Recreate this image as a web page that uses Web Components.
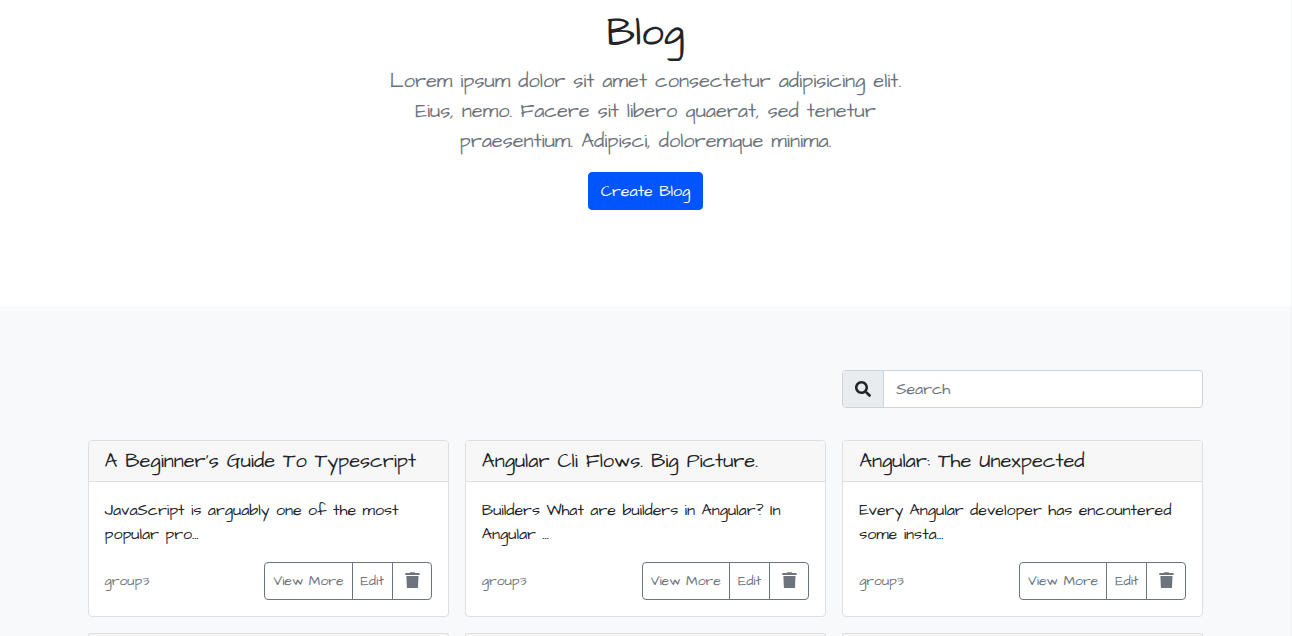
<!DOCTYPE html>
<html lang="en">
<head>
<meta charset="utf-8">
<title>Blog</title>
<style>
  html, body { margin: 0; height: 100%; overflow: hidden; }
  body { background: #fff; color: #212529; font-family: "Architects Daughter", Lato, "Open Sans", sans-serif; font-size: 16px; line-height: 24px; }
</style>
</head>
<body>
<blog-page></blog-page>
<script>
const define = (name, html) => {
  const tpl = document.createElement('template');
  tpl.innerHTML = html;
  customElements.define(name, class extends HTMLElement {
    connectedCallback() {
      if (this.shadowRoot) return;
      this.attachShadow({ mode: 'open' }).append(tpl.content.cloneNode(true));
    }
  });
};

define('icon-search', `
<style>:host { display: block; width: 16px; height: 16px; } svg { display: block; }</style>
<svg width="16" height="16" viewBox="0 0 512 512" fill="currentColor"><path d="M505 442.7L405.3 343c-4.500-4.500-10.600-7-17-7H372c27.600-35.300 44-79.700 44-128C416 93.100 322.900 0 208 0S0 93.100 0 208s93.100 208 208 208c48.300 0 92.700-16.400 128-44v16.300c0 6.400 2.500 12.500 7 17l99.700 99.700c9.400 9.400 24.600 9.400 33.900 0l28.300-28.300c9.400-9.400 9.400-24.600.1-34zM208 336c-70.700 0-128-57.200-128-128 0-70.700 57.200-128 128-128 70.700 0 128 57.200 128 128 0 70.700-57.200 128-128 128z"/></svg>`);

define('icon-trash', `
<style>:host { display: block; width: 14px; height: 16px; } svg { display: block; overflow: visible; }</style>
<svg width="14" height="16" viewBox="0 0 448 512" fill="currentColor"><path transform="translate(14 0)" d="M438 28H312l-9.400-10A24 24 0 0 0 281.100 8H166.800a23.700 23.700 0 0 0-21.400 10L136 28H10A16 16 0 0 0 -6 44v36a16 16 0 0 0 16 16h428a16 16 0 0 0 16-16V44a16 16 0 0 0-16-16zM45 484a28 28 0 0 0 28 28h302a28 28 0 0 0 28-28L418 128H30z"/></svg>`);

define('primary-button', `
<style>
  :host { display: inline-block; }
  button { display: block; padding: 6px 12px; border: 1px solid #0055ff; border-radius: 4px; background: #0055ff; color: #fff; font: inherit; line-height: 24px; }
</style><button><slot></slot></button>`);

define('blog-hero', `
<style>
  :host { display: block; box-sizing: border-box; height: 306px; padding-top: 10px; text-align: center; }
  h1 { margin: 0 0 8px; font-size: 40px; font-weight: 400; line-height: 48px; }
  p { margin: 0 auto 16px; width: 547px; font-size: 20px; line-height: 30px; color: #6c757d; }
</style>
<h1>Blog</h1>
<p>Lorem ipsum dolor sit amet consectetur adipisicing elit. Eius, nemo. Facere sit libero quaerat, sed tenetur praesentium. Adipisci, doloremque minima.</p>
<primary-button>Create Blog</primary-button>`);

define('search-box', `
<style>
  :host { display: flex; box-sizing: border-box; height: 38px; border: 1px solid #ced4da; border-radius: 4px; background: #fff; overflow: hidden; }
  .icon { box-sizing: border-box; width: 41px; padding: 10px 12px; background: #e9ecef; border-right: 1px solid #ced4da; }
  input { flex: 1; min-width: 0; padding: 0 12px; border: 0; outline: 0; background: none; font: inherit; line-height: 24px; color: #495057; }
  input::placeholder { color: #6c757d; opacity: 1; }
</style>
<div class="icon"><icon-search></icon-search></div>
<input placeholder="Search">`);

define('button-group', `
<style>
  :host { display: flex; color: #6c757d; }
  button { display: flex; align-items: center; box-sizing: border-box; height: 38px; padding: 0 8px; border: 1px solid #6c757d; background: none; color: inherit; font: inherit; font-size: 14px; line-height: 21px; }
  button + button { margin-left: -1px; }
  button:first-of-type { border-radius: 4px 0 0 4px; }
  button:last-of-type { border-radius: 0 4px 4px 0; padding: 0 12px; }
  icon-trash { margin-top: -2px; }
</style>
<button>View More</button><button>Edit</button><button><icon-trash></icon-trash></button>`);

define('blog-card', `
<style>
  :host { display: block; box-sizing: border-box; height: 177px; border: 1px solid #dfdfdf; border-radius: 4px; background: #fff; overflow: hidden; }
  header { box-sizing: border-box; height: 41px; padding: 8px 16px; background: #f7f7f7; border-bottom: 1px solid #dfdfdf; font-size: 20px; line-height: 24px; }
  .body { padding: 16px; }
  p { margin: 0 0 16px; height: 48px; }
  footer { display: flex; justify-content: space-between; align-items: center; height: 38px; font-size: 14px; color: #6c757d; }
</style>
<header><slot name="title"></slot></header>
<div class="body">
  <p><slot></slot></p>
  <footer><span>group3</span><button-group></button-group></footer>
</div>`);

define('card-edge', `
<style>
  :host { display: block; box-sizing: border-box; height: 3px; border: 1px solid #dfdfdf; border-bottom: 0; border-radius: 4px 4px 0 0; background: #f7f7f7; }
</style>`);

define('blog-page', `
<style>
  :host { display: block; box-sizing: border-box; height: 636px; width: 1292px; overflow: hidden; border-right: 1px solid #f3f4f5; }
  main { box-sizing: border-box; height: 330px; overflow: hidden; background: #f8f9fb; padding: 64px 87.550px 0 87.500px; }
  .grid { display: grid; grid-template-columns: repeat(3, 1fr); column-gap: 16px; }
  .search { margin-bottom: 32px; }
  .cards { row-gap: 16px; }
  search-box { grid-column: 3; }
</style>
<blog-hero></blog-hero>
<main>
  <div class="grid search"><search-box></search-box></div>
  <div class="grid cards">
    <blog-card><span slot="title">A Beginner's Guide To Typescript</span>JavaScript is arguably one of the most popular pro...</blog-card>
    <blog-card><span slot="title">Angular Cli Flows. Big Picture.</span>Builders What are builders in Angular? In Angular ...</blog-card>
    <blog-card><span slot="title">Angular: The Unexpected</span>Every Angular developer has encountered some insta...</blog-card>
    <card-edge></card-edge><card-edge></card-edge><card-edge></card-edge>
  </div>
</main>`);
</script>
</body>
</html>
